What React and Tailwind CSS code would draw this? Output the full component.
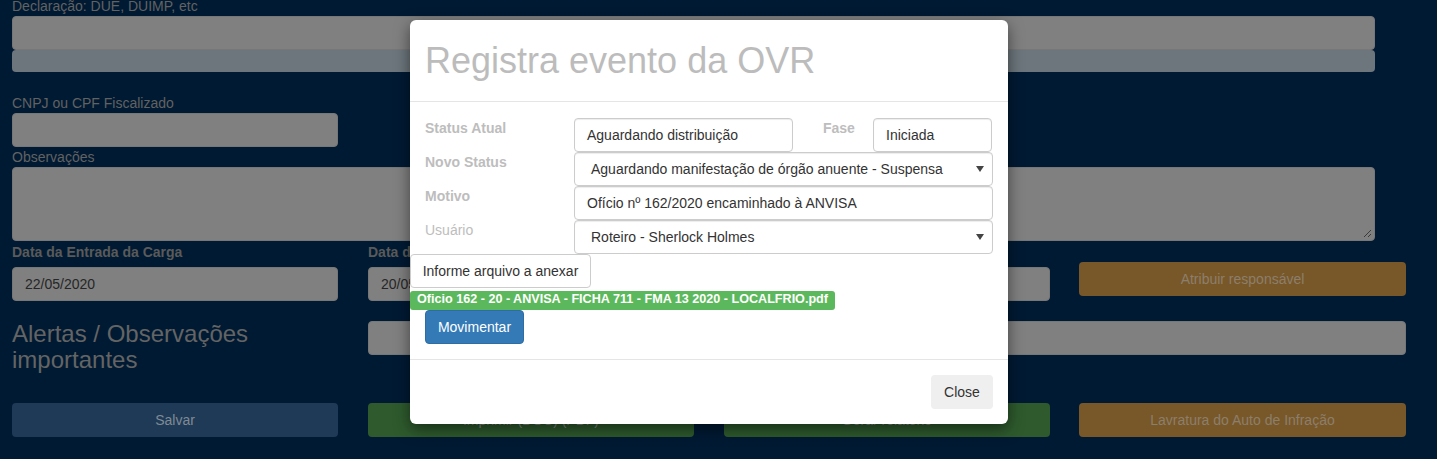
import React from "react";

// Page behind the modal (already dimmed by the backdrop)
const PageLabel = ({ children, bold }) => (
  <div
    className={`h-[20px] leading-[20px] mb-[5px] whitespace-nowrap overflow-hidden ${
      bold ? "font-bold text-[#5a5a5a]" : "text-[#626262]"
    }`}
  >
    {children}
  </div>
);

const PageInput = ({ value, className = "" }) => (
  <div
    className={`h-[34px] rounded-[4px] bg-[#808080] border border-[#777] px-[12px] leading-[32px] text-[#262626] whitespace-nowrap overflow-hidden ${className}`}
  >
    {value}
  </div>
);

const PageButton = ({ children, color }) => (
  <div
    className={`h-[34px] rounded-[4px] leading-[34px] text-center whitespace-nowrap overflow-hidden ${color}`}
  >
    {children}
  </div>
);

const Field = ({ children, className = "" }) => (
  <div
    className={`h-[34px] rounded-[4px] border border-[#ccc] bg-white shadow-[inset_0_1px_1px_rgba(0,0,0,0.075)] leading-[32px] text-[#333] whitespace-nowrap overflow-hidden ${className}`}
  >
    {children}
  </div>
);

const SelectField = ({ children }) => (
  <Field className="flex items-center justify-between pl-[16px] pr-[8px]">
    <span>{children}</span>
    <svg width="8" height="6" viewBox="0 0 8 6">
      <path d="M0 0 L8 0 L4 6 Z" fill="#444" />
    </svg>
  </Field>
);

const ModalLabel = ({ children, bold = true }) => (
  <div
    className={`w-[149px] shrink-0 h-[34px] leading-[20px] text-[#bdbdbd] ${
      bold ? "font-bold" : ""
    }`}
  >
    {children}
  </div>
);

export default function App() {
  return (
    <div className="relative w-[1437px] h-[459px] overflow-hidden bg-[#001a33] font-['Liberation_Sans',Arial,sans-serif] text-[14px]">
      {/* background form */}
      <div className="pl-[11px] pt-0 mt-[-4px]">
        <div className="pl-[1px]">
          <PageLabel>Declaração: DUE, DUIMP, etc</PageLabel>
          <div className="w-[1363px] mt-[-5px]">
            <PageInput />
            <div className="h-[22px] rounded-[4px] bg-[#6c767c]" />
          </div>

          <div className="mt-[21px] w-[326px]">
            <PageLabel>CNPJ ou CPF Fiscalizado</PageLabel>
            <div className="mt-[-5px]">
              <PageInput />
            </div>
          </div>

          <div className="w-[1363px]">
            <PageLabel>Observações</PageLabel>
            <div className="relative mt-[-5px] h-[74px] rounded-[4px] bg-[#808080] border border-[#777]">
              <svg
                className="absolute right-[2px] bottom-[2px]"
                width="9"
                height="9"
                viewBox="0 0 9 9"
              >
                <path d="M8 1 L1 8 M8 5 L5 8" stroke="#3a3a3a" strokeWidth="1" />
              </svg>
            </div>
          </div>
        </div>

        <div className="grid grid-cols-[repeat(4,326px)] gap-x-[30px] mt-[1px] pl-[1px]">
          <div>
            <PageLabel bold>Data da Entrada da Carga</PageLabel>
            <PageInput value="22/05/2020" />
          </div>
          <div>
            <PageLabel bold>Data da Fiscalização</PageLabel>
            <PageInput value="20/05/2020" />
          </div>
          <div>
            <PageLabel bold>Data de Encerramento</PageLabel>
            <PageInput />
          </div>
          <div className="pt-[20px] ml-[-1px]">
            <PageButton color="bg-[#785828] text-[#8c7e6c]">
              Atribuir responsável
            </PageButton>
          </div>
        </div>

        <div className="grid grid-cols-[repeat(4,326px)] gap-x-[30px] mt-[20px] pl-[1px]">
          <div className="text-[24px] leading-[26px] text-[#646464]">
            Alertas / Observações importantes
          </div>
          <div className="col-span-3">
            <PageInput />
          </div>
        </div>

        <div className="grid grid-cols-[repeat(4,326px)] gap-x-[30px] mt-[30px] pl-[1px]">
          <PageButton color="bg-[#1e3a57] text-[#808a94]">Salvar</PageButton>
          <PageButton color="bg-[#2e5a2d] text-[#808a80]">
            Imprimir (DOC) (PDF)
          </PageButton>
          <PageButton color="bg-[#2e5a2d] text-[#808a80]">
            Gerar relatório
          </PageButton>
          <div className="ml-[-1px]">
            <PageButton color="bg-[#785828] text-[#8c7e6c]">
              Lavratura do Auto de Infração
            </PageButton>
          </div>
        </div>
      </div>

      {/* modal */}
      <div className="absolute left-[410px] top-[20px] w-[598px] rounded-[6px] bg-white shadow-[0_5px_15px_rgba(0,0,0,0.5)]">
        <div className="p-[15px] border-b border-[#e5e5e5]">
          <h4 className="text-[36px] leading-[51px] text-[#bcbcbc]">
            Registra evento da OVR
          </h4>
        </div>

        <div className="pt-[16px] pb-[15px] pr-[14px]">
          <div className="pl-[15px] flex">
            <ModalLabel>Status Atual</ModalLabel>
            <Field className="w-[219px] px-[12px]">Aguardando distribuição</Field>
            <div className="w-[80px] pl-[30px] font-bold leading-[20px] text-[#bdbdbd]">
              Fase
            </div>
            <Field className="w-[119px] px-[12px]">Iniciada</Field>
          </div>
          <div className="pl-[15px] flex">
            <ModalLabel>Novo Status</ModalLabel>
            <div className="w-[419px]">
              <SelectField>
                Aguardando manifestação de órgão anuente - Suspensa
              </SelectField>
            </div>
          </div>
          <div className="pl-[15px] flex">
            <ModalLabel>Motivo</ModalLabel>
            <Field className="w-[419px] px-[12px]">
              Ofício nº 162/2020 encaminhado à ANVISA
            </Field>
          </div>
          <div className="pl-[15px] flex">
            <ModalLabel bold={false}>Usuário</ModalLabel>
            <div className="w-[419px]">
              <SelectField>Roteiro - Sherlock Holmes</SelectField>
            </div>
          </div>

          <div className="w-[181px] h-[34px] rounded-[4px] border border-[#ccc] bg-white leading-[32px] text-center text-[#333]">
            Informe arquivo a anexar
          </div>
          <div className="mt-[3px] inline-block h-[19px] rounded-[3px] bg-[#5cb85c] px-[7px] pt-[2px] text-[12.6px] leading-[13px] font-bold text-white whitespace-nowrap">
            Oficio 162 - 20 - ANVISA - FICHA 711 - FMA 13 2020 - LOCALFRIO.pdf
          </div>
          <div className="pl-[15px]">
            <div className="w-[99px] h-[34px] rounded-[4px] border border-[#2e6da4] bg-[#337ab7] leading-[32px] text-center text-white">
              Movimentar
            </div>
          </div>
        </div>

        <div className="flex justify-end p-[15px] border-t border-[#e5e5e5]">
          <div className="w-[62px] h-[34px] rounded-[4px] bg-[#efefef] leading-[34px] text-center text-[#333]">
            Close
          </div>
        </div>
      </div>
    </div>
  );
}
